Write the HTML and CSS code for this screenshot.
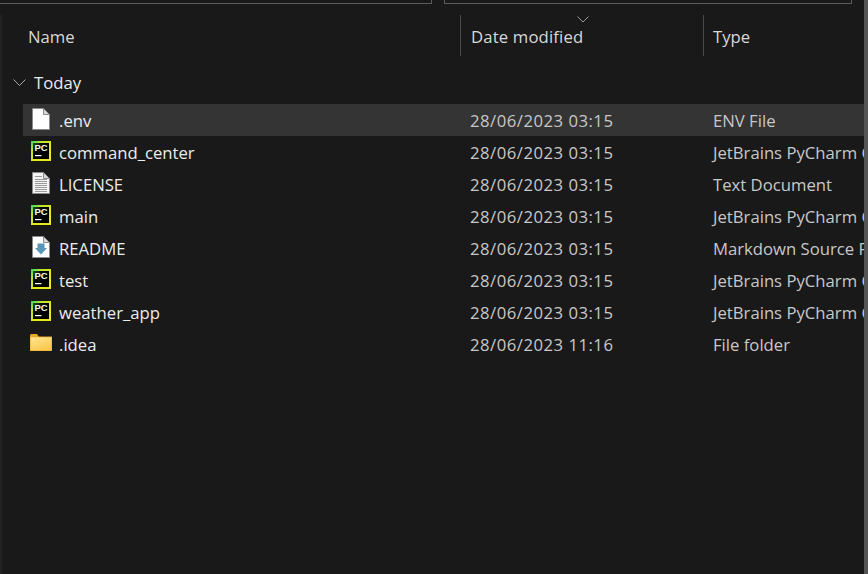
FILE: index.html
```html
<!DOCTYPE html>
<html lang="en">
<head>
<meta charset="utf-8">
<title>Explorer</title>
<link rel="stylesheet" href="styles.css">
</head>
<body>
<svg class="defs" width="0" height="0">
  <defs>
    <linearGradient id="g-pc" x1="0" y1="0" x2="1" y2="1">
      <stop offset="0" stop-color="#2fd66a"/>
      <stop offset="0.25" stop-color="#b4e62a"/>
      <stop offset="0.6" stop-color="#e6ea1a"/>
      <stop offset="1" stop-color="#eeea18"/>
    </linearGradient>
    <linearGradient id="g-pc-in" x1="0" y1="0" x2="0.6" y2="0.6">
      <stop offset="0" stop-color="#0f5a2c"/>
      <stop offset="0.5" stop-color="#050805"/>
      <stop offset="1" stop-color="#000"/>
    </linearGradient>
    <linearGradient id="g-folder" x1="0" y1="0" x2="0.5" y2="1">
      <stop offset="0" stop-color="#ffe692"/>
      <stop offset="1" stop-color="#fbc84e"/>
    </linearGradient>
    <symbol id="i-pc" viewBox="0 0 20 20">
      <rect width="20" height="20" fill="url(#g-pc)"/>
      <rect x="2" y="2" width="16" height="16" fill="url(#g-pc-in)"/>
      <text x="3.6" y="10.4" class="pc-letters">PC</text>
      <rect x="4" y="14" width="6.5" height="1.2" fill="#fff"/>
    </symbol>
    <symbol id="i-blank" viewBox="0 0 18 22">
      <path d="M.5.5h11l6 6v15H.5z" fill="#fff" stroke="#8a8a8a"/>
      <path d="M11.5.5v6h6z" fill="#d8d8d8" stroke="#8a8a8a"/>
    </symbol>
    <symbol id="i-text" viewBox="0 0 18 22">
      <path d="M.5.5h11l6 6v15H.5z" fill="#f4f4f4" stroke="#8a8a8a"/>
      <path d="M11.5.5v6h6z" fill="#d8d8d8" stroke="#8a8a8a"/>
      <path d="M3 4.5h7M3 7.5h12M3 9.5h12M3 11.5h12M3 13.5h12M3 15.5h12M3 17.5h12M3 19.5h12" stroke="#9a9a9a" fill="none"/>
    </symbol>
    <symbol id="i-md" viewBox="0 0 18 22">
      <path d="M.5.5h11l6 6v15H.5z" fill="#fff" stroke="#8a8a8a"/>
      <path d="M11.5.5v6h6z" fill="#d8d8d8" stroke="#8a8a8a"/>
      <path d="M5.5 7.5h7v4.5H15l-6 6.5L3 12h2.5z" fill="#5a96b8"/>
    </symbol>
    <symbol id="i-folder" viewBox="0 0 22 17">
      <path d="M0 1.5A1.5 1.5 0 0 1 1.5 0H7l2 3H0z" fill="#e9a821"/>
      <rect x="0" y="2.5" width="22" height="14.5" fill="#e2a52a"/>
      <rect x="0.5" y="3.3" width="21" height="13.2" fill="url(#g-folder)"/>
    </symbol>
  </defs>
</svg>
<div class="explorer">
  <div class="edge"></div>
  <div class="scrollbar"></div>
  <div class="topbar">
    <div class="field field-main"></div>
    <div class="field field-search"></div>
  </div>
  <div class="headers">
    <div class="col col-name">Name</div>
    <div class="col col-date">
      <svg class="sort" width="12" height="7" viewBox="0 0 12 7"><path d="M.5.5 6 6 11.5.5" fill="none" stroke="#9a9a9a"/></svg>
      Date modified
    </div>
    <div class="col col-type">Type</div>
  </div>
  <div class="group">
    <svg class="chevron" width="13" height="7" viewBox="0 0 13 7"><path d="M.5.5 6.5 6.5 12.5.5" fill="none" stroke="#a8a8a8"/></svg>
    <span>Today</span>
  </div>
  <div class="list">
    <div class="row row-selected">
      <div class="c-name"><svg class="icon icon-file"><use href="#i-blank"/></svg>.env</div>
      <div class="c-date">28/06/2023 03:15</div>
      <div class="c-type">ENV File</div>
    </div>
    <div class="row">
      <div class="c-name"><svg class="icon icon-pc"><use href="#i-pc"/></svg>command_center</div>
      <div class="c-date">28/06/2023 03:15</div>
      <div class="c-type">JetBrains PyCharm Community Edition</div>
    </div>
    <div class="row">
      <div class="c-name"><svg class="icon icon-file"><use href="#i-text"/></svg>LICENSE</div>
      <div class="c-date">28/06/2023 03:15</div>
      <div class="c-type">Text Document</div>
    </div>
    <div class="row">
      <div class="c-name"><svg class="icon icon-pc"><use href="#i-pc"/></svg>main</div>
      <div class="c-date">28/06/2023 03:15</div>
      <div class="c-type">JetBrains PyCharm Community Edition</div>
    </div>
    <div class="row">
      <div class="c-name"><svg class="icon icon-file"><use href="#i-md"/></svg>README</div>
      <div class="c-date">28/06/2023 03:15</div>
      <div class="c-type">Markdown Source File</div>
    </div>
    <div class="row">
      <div class="c-name"><svg class="icon icon-pc"><use href="#i-pc"/></svg>test</div>
      <div class="c-date">28/06/2023 03:15</div>
      <div class="c-type">JetBrains PyCharm Community Edition</div>
    </div>
    <div class="row">
      <div class="c-name"><svg class="icon icon-pc"><use href="#i-pc"/></svg>weather_app</div>
      <div class="c-date">28/06/2023 03:15</div>
      <div class="c-type">JetBrains PyCharm Community Edition</div>
    </div>
    <div class="row">
      <div class="c-name"><svg class="icon icon-folder"><use href="#i-folder"/></svg>.idea</div>
      <div class="c-date">28/06/2023 11:16</div>
      <div class="c-type">File folder</div>
    </div>
  </div>
</div>
</body>
</html>
```
FILE: styles.css
```css
html, body { margin: 0; padding: 0; height: 100%; background: #191919; overflow: hidden; }
.defs { position: absolute; }
.explorer {
  position: relative;
  width: 868px; height: 574px; overflow: hidden; background: #191919; color: #ececec;
  font-family: "Open Sans", "Noto Sans", sans-serif; font-size: 16.7px;
}
.edge { position: absolute; left: 0; top: 15px; bottom: 0; width: 2px; background: #222; }
.scrollbar { position: absolute; right: 0; top: 0; bottom: 0; width: 4px; background: #555; }
.topbar { display: flex; gap: 12px; height: 4px; }
.field { height: 4px; border: solid #5c5c5c; border-width: 0 1px 1px 0; box-sizing: border-box; }
.field-main { width: 432px; }
.field-search { width: 408px; border-left-width: 1px; }
.headers { display: flex; height: 41px; margin-top: 11px; }
.col { box-sizing: border-box; line-height: 44px; white-space: nowrap; color: #d8d8d8; }
.col-name { width: 460px; padding-left: 28px; }
.col-date { position: relative; width: 243px; padding-left: 10px; border-left: 1px solid #4a4a4a; letter-spacing: .15px; }
.col-type { flex: 1; padding-left: 9px; border-left: 1px solid #4a4a4a; }
.sort { position: absolute; left: 116px; top: 1px; }
.group { display: flex; align-items: center; height: 26px; margin-top: 13px; padding-left: 13px; gap: 8px; }
.chevron { flex: none; }
.list { margin-top: 9px; margin-right: 4px; margin-left: 23px; overflow: hidden; }
.row { display: flex; height: 32px; line-height: 33px; white-space: nowrap; }
.row-selected { background: #343434; }
.c-name { display: flex; align-items: flex-start; flex: none; width: 437px; }
.c-date { flex: none; width: 243px; padding-left: 10px; box-sizing: border-box; color: #c8c8c8; letter-spacing: .5px; }
.c-type { flex: 1; padding-left: 10px; color: #c8c8c8; overflow: hidden; }
.icon { flex: none; }
.icon-file { width: 18px; height: 22px; margin: 4px 9px 0 9px; }
.icon-pc { width: 20px; height: 20px; margin: 5px 8px 0 8px; }
.icon-folder { width: 22px; height: 17px; margin: 6px 7px 0 7px; }
.pc-letters { font-family: "Liberation Sans", sans-serif; font-weight: 700; font-size: 9.5px; letter-spacing: -.3px; fill: #f4fff0; }
```
